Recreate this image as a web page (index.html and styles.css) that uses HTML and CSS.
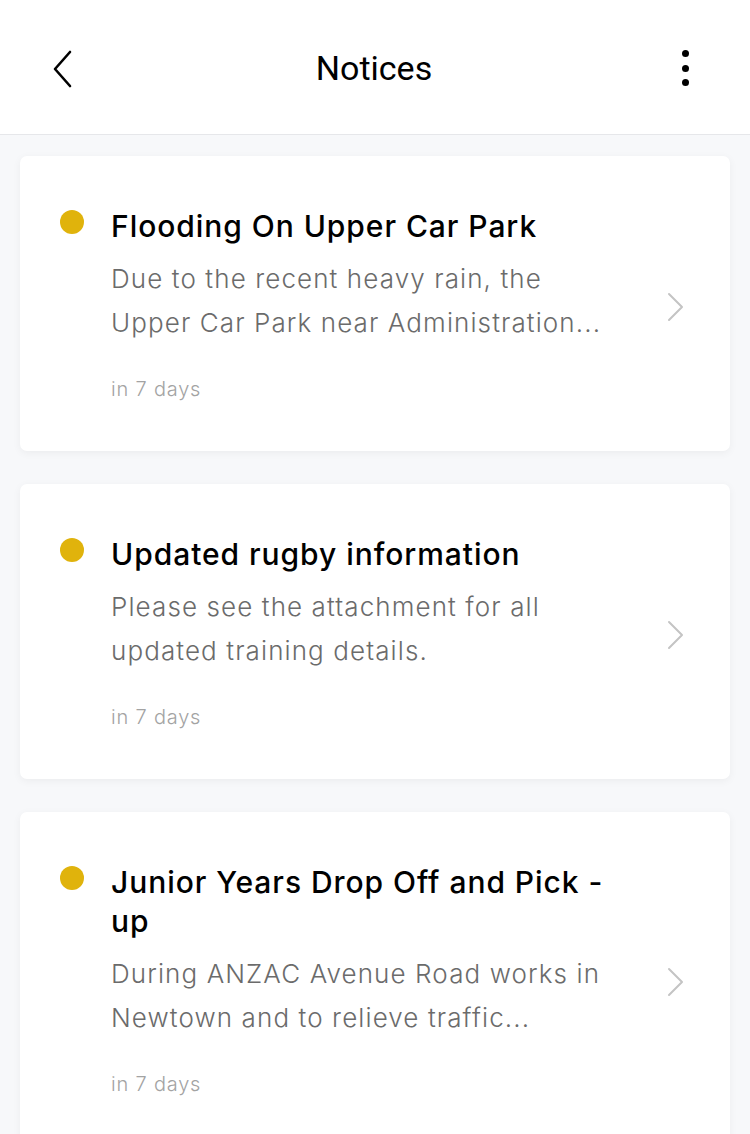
FILE: index.html
```html
<!DOCTYPE html>
<html lang="en">
<head>
<meta charset="utf-8">
<title>Notices</title>
<link rel="stylesheet" href="styles.css">
</head>
<body>
<header class="topbar">
  <button class="icon-btn back" aria-label="Back">
    <svg width="26" height="40" viewBox="0 0 26 40"><path d="M20 3 L5 20 L20 37" fill="none" stroke="#000" stroke-width="2.6" stroke-linecap="round" stroke-linejoin="round"/></svg>
  </button>
  <h1 class="title">Notices</h1>
  <button class="icon-btn more" aria-label="More">
    <span class="dot3"></span><span class="dot3"></span><span class="dot3"></span>
  </button>
</header>
<main class="list">
  <article class="card">
    <span class="status"></span>
    <div class="body">
      <h2 class="card-title">Flooding On Upper Car Park</h2>
      <p class="desc">Due to the recent heavy rain, the Upper Car Park near Administration...</p>
      <p class="meta">in 7 days</p>
    </div>
    <div class="chev">
      <svg width="20" height="30" viewBox="0 0 20 30"><path d="M3 2 L16 15 L3 28" fill="none" stroke="#c4c4c4" stroke-width="2" stroke-linecap="round" stroke-linejoin="round"/></svg>
    </div>
  </article>
  <article class="card">
    <span class="status"></span>
    <div class="body">
      <h2 class="card-title">Updated rugby information</h2>
      <p class="desc">Please see the attachment for all updated training details.</p>
      <p class="meta">in 7 days</p>
    </div>
    <div class="chev">
      <svg width="20" height="30" viewBox="0 0 20 30"><path d="M3 2 L16 15 L3 28" fill="none" stroke="#c4c4c4" stroke-width="2" stroke-linecap="round" stroke-linejoin="round"/></svg>
    </div>
  </article>
  <article class="card">
    <span class="status"></span>
    <div class="body">
      <h2 class="card-title">Junior Years Drop Off and Pick -&#8203;up</h2>
      <p class="desc">During ANZAC Avenue Road works in Newtown and to relieve traffic...</p>
      <p class="meta">in 7 days</p>
    </div>
    <div class="chev">
      <svg width="20" height="30" viewBox="0 0 20 30"><path d="M3 2 L16 15 L3 28" fill="none" stroke="#c4c4c4" stroke-width="2" stroke-linecap="round" stroke-linejoin="round"/></svg>
    </div>
  </article>
</main>
</body>
</html>
```
FILE: styles.css
```css
* { box-sizing: border-box; }
html, body { margin: 0; padding: 0; }
body {
  background: #f7f8fa;
  font-family: Inter, "Noto Sans", sans-serif;
  width: 750px;
  min-height: 1134px;
  overflow: hidden;
}
.topbar {
  height: 135px;
  background: #fff;
  border-bottom: 1px solid #e6e7ea;
  display: grid;
  grid-template-columns: 1fr auto 1fr;
  align-items: center;
  padding: 0 50px 0 48px;
}
.icon-btn {
  background: none;
  border: 0;
  padding: 0;
  width: 30px;
  height: 44px;
  display: flex;
  align-items: center;
  justify-content: center;
}
.back { margin-top: 4px; }
.more {
  justify-self: end;
  flex-direction: column;
  gap: 7.5px;
  margin-top: 2px;
}
.dot3 {
  width: 7px;
  height: 7px;
  border-radius: 50%;
  background: #000;
}
.title {
  margin: 0;
  font-family: Roboto, "Liberation Sans", sans-serif;
  font-weight: 400;
  font-size: 34px;
  line-height: 40px;
  color: #000;
  margin-top: 2px;
}
.list {
  padding: 21px 20px 0;
  display: flex;
  flex-direction: column;
  gap: 33px;
}
.card {
  background: #fff;
  border-radius: 7px;
  box-shadow: 0 2px 8px rgba(0, 0, 0, 0.05);
  display: flex;
  align-items: flex-start;
  padding: 51px 44px 47px 40px;
  min-height: 295px;
}
.status {
  flex: none;
  width: 24px;
  height: 24px;
  border-radius: 50%;
  background: #e0b30c;
  margin-top: 3px;
}
.body {
  width: 505px;
  margin-left: 27px;
  flex: none;
}
.card-title {
  margin: 0;
  font-size: 30px;
  font-weight: 500;
  line-height: 39px;
  letter-spacing: 0.95px;
  color: #000;
}
.desc {
  margin: 11px 0 0;
  font-size: 26px;
  font-weight: 300;
  line-height: 44px;
  letter-spacing: 1.1px;
  color: #6b6b6b;
}
.meta {
  margin: 29px 0 0;
  font-size: 20px;
  font-weight: 300;
  line-height: 30px;
  letter-spacing: 0.8px;
  color: #a3a3a3;
}
.chev {
  align-self: center;
  margin-left: auto;
  margin-top: 2px;
  display: flex;
}
```
